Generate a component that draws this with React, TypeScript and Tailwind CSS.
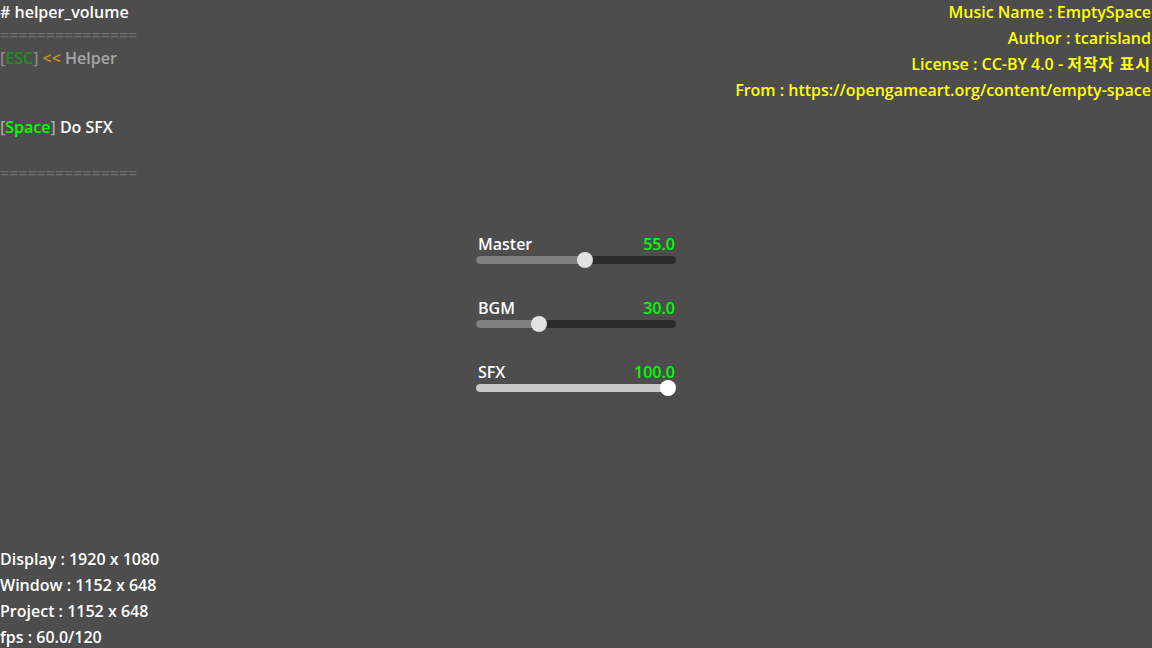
import React from "react";

const font = { fontFamily: '"Open Sans", "Noto Sans CJK KR", sans-serif' };

type Vol = { name: string; value: number; active?: boolean };

const volumes: Vol[] = [
  { name: "Master", value: 55 },
  { name: "BGM", value: 30 },
  { name: "SFX", value: 100, active: true },
];

function VolumeSlider({ vol }: { vol: Vol }) {
  // grabber center moves between 8px and 192px of the 200px track
  const center = 8 + (vol.value / 100) * 184;
  return (
    <div className="w-[200px] h-[64px] flex flex-col">
      <div className="flex justify-between pl-[2px] pr-[1px] h-6 leading-6">
        <span className="text-white">{vol.name}</span>
        <span className="text-[#00ff00]">{vol.value.toFixed(1)}</span>
      </div>
      <div className="relative h-2 rounded-full bg-[#2b2b2b]">
        <div
          className={`h-2 rounded-full ${vol.active ? "bg-[#c8c8c8]" : "bg-[#808080]"}`}
          style={{ width: center }}
        />
        <div
          className={`absolute top-[-4px] w-4 h-4 rounded-full ${
            vol.active ? "bg-white" : "bg-[radial-gradient(circle_at_40%_45%,#e2e2e2_55%,#c4c4c4_100%)]"
          }`}
          style={{ left: center - 8 }}
        />
      </div>
    </div>
  );
}

export default function App() {
  return (
    <div
      className="w-[1152px] h-[648px] bg-[#4d4d4d] flex flex-col text-[16px] font-semibold overflow-hidden"
      style={font}
    >
      <div className="flex justify-between h-[184px]">
        {/* helper text */}
        <div className="flex flex-col leading-[23px] pt-px">
          <div className="text-white"># helper_volume</div>
          <div className="text-[#6f6f6f]">===============</div>
          <div>
            <span className="text-[#8a8a8a]">[</span>
            <span className="text-[#1f8f1f]">ESC</span>
            <span className="text-[#8a8a8a]">]</span>{" "}
            <span className="text-[#c8961e]">&lt;&lt;</span>{" "}
            <span className="text-[#a6a6a6]">Helper</span>
          </div>
          <div>&nbsp;</div>
          <div>&nbsp;</div>
          <div>
            <span className="text-[#a6a6a6]">[</span>
            <span className="text-[#00ff00]">Space</span>
            <span className="text-[#a6a6a6]">]</span>{" "}
            <span className="text-white">Do SFX</span>
          </div>
          <div>&nbsp;</div>
          <div className="text-[#6f6f6f]">===============</div>
        </div>

        {/* music credits */}
        <div className="flex flex-col items-end gap-[2px] leading-6 text-[#ffff00] pr-[1px]">
          <div>Music Name : EmptySpace</div>
          <div>Author : tcarisland</div>
          <div>
            License : CC-BY 4.0 - <span className="tracking-[1px]">저작자 표시</span>
          </div>
          <div>From : https://opengameart.org/content/empty-space</div>
        </div>
      </div>

      <div className="flex flex-col items-center mt-[48px]">
        {volumes.map((v) => (
          <VolumeSlider key={v.name} vol={v} />
        ))}
      </div>

      <div className="flex-1" />

      <div className="flex flex-col gap-[2px] leading-6 text-white -mb-px">
        <div>Display : 1920 x 1080</div>
        <div>Window : 1152 x 648</div>
        <div>Project : 1152 x 648</div>
        <div>fps : 60.0/120</div>
      </div>
    </div>
  );
}
